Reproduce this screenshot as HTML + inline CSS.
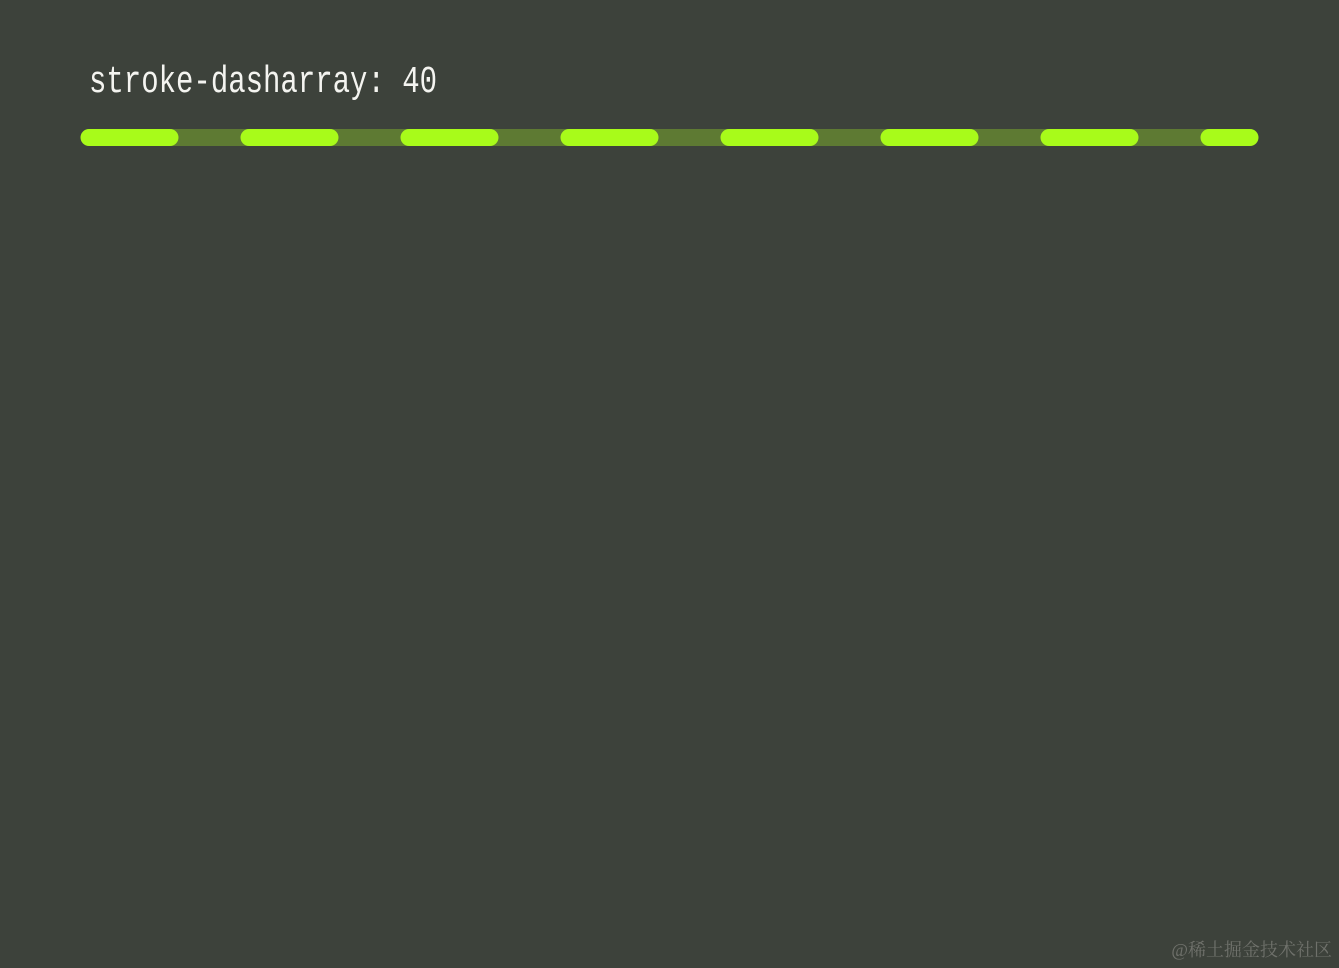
<!DOCTYPE html>
<html><head><meta charset="utf-8"><style>
html,body{margin:0;padding:0;width:1339px;height:968px;background:#3d423b;overflow:hidden}
.t{position:absolute;left:89px;top:61px;font-family:"Liberation Mono",monospace;font-size:29px;line-height:34px;color:#f4f4f0;white-space:pre;transform:scaleY(1.3);transform-origin:0 0}
.w{position:absolute;right:7px;bottom:6px;font-family:"Liberation Serif","Noto Serif CJK SC",serif;font-size:18px;color:#6f716b}
</style></head><body>
<div class="t">stroke-dasharray: 40</div>
<svg style="position:absolute;left:0;top:0" width="1339" height="968">
<rect x="88" y="129" width="1162" height="17" fill="#5e7a33"/>
<line x1="89" y1="137.5" x2="1250" y2="137.5" stroke="#a8fb1a" stroke-width="17" stroke-linecap="round" stroke-dasharray="81 79"/>
</svg>
<div class="w">@稀土掘金技术社区</div>
</body></html>
